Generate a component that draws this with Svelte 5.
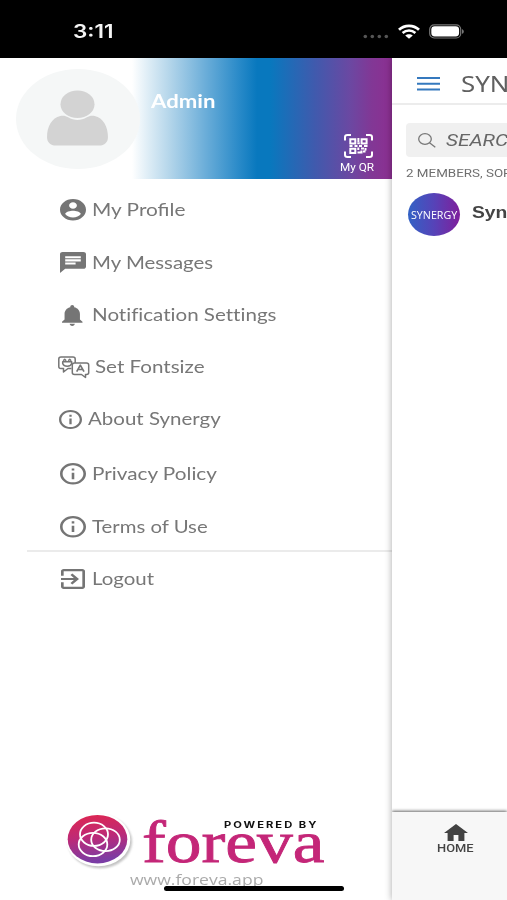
<script>
  const account = 'M12 2C6.48 2 2 6.48 2 12s4.48 10 10 10 10-4.48 10-10S17.52 2 12 2zm0 3c1.66 0 3 1.34 3 3s-1.34 3-3 3-3-1.34-3-3 1.34-3 3-3zm0 14.2c-2.5 0-4.71-1.28-6-3.22.03-1.99 4-3.08 6-3.08 1.99 0 5.97 1.09 6 3.08-1.29 1.94-3.5 3.22-6 3.22z';
  const chat = 'M20 2H4c-1.1 0-1.99.9-1.99 2L2 22l4-4h14c1.1 0 2-.9 2-2V4c0-1.1-.9-2-2-2zM6 9h12v2H6V9zm8 5H6v-2h8v2zm4-6H6V6h12v2z';
  const bell = 'M12 22c1.1 0 2-.9 2-2h-4c0 1.1.89 2 2 2zm6-6v-5c0-3.07-1.64-5.64-4.5-6.32V4c0-.83-.67-1.5-1.5-1.5s-1.5.67-1.5 1.5v.68C7.63 5.36 6 7.92 6 11v5l-2 2v1h16v-1l-2-2z';
  const info = 'M11 17h2v-6h-2v6zm1-15C6.48 2 2 6.48 2 12s4.48 10 10 10 10-4.48 10-10S17.52 2 12 2zm0 18c-4.41 0-8-3.59-8-8s3.59-8 8-8 8 3.59 8 8-3.59 8-8 8zM11 9h2V7h-2v2z';
  const exit = 'M10.09 15.59L11.5 17l5-5-5-5-1.41 1.41L12.67 11H3v2h9.67l-2.58 2.59zM19 3H5c-1.11 0-2 .9-2 2v4h2V5h14v14H5v-4H3v4c0 1.1.89 2 2 2h14c1.1 0 2-.9 2-2V5c0-1.1-.9-2-2-2z';

  const items = [
    { label: 'My Profile', w: 93, h: 52, x: 59.5, gap: 6, iw: 26, ih: 21.5, vb: '2 2 20 20', d: account },
    { label: 'My Messages', w: 121, h: 53, x: 59.5, gap: 6, iw: 26, ih: 21, vb: '2 2 20 20', d: chat },
    { label: 'Notification Settings', w: 185, h: 52, x: 62, gap: 9, iw: 20.5, ih: 21, vb: '4 2.5 16 19.5', d: bell, plain: true },
    { label: 'Set Fontsize', w: 109, h: 52, x: 58, gap: 4.5, iw: 32, ih: 22, vb: '0 0 32 22', d: null },
    { label: 'About Synergy', w: 132.5, h: 52, x: 59, gap: 6, iw: 23, ih: 19, vb: '2 2 20 20', d: info },
    { label: 'Privacy Policy', w: 125.5, h: 58, x: 59.5, gap: 6, iw: 26, ih: 21.5, vb: '2 2 20 20', d: info },
    { label: 'Terms of Use', w: 116, h: 47, x: 59.5, gap: 6, iw: 26, ih: 21.5, vb: '2 2 20 20', d: info },
    { label: 'Logout', w: 62.5, h: 54, x: 60.5, gap: 7, iw: 24, ih: 20, vb: '3 3 18 18', d: exit, rule: true }
  ];

  // Stretches a label horizontally to the given width.
  function fit(node, width) {
    node.style.transform = `scaleX(${width / node.offsetWidth})`;
  }
</script>

<div class="screen">
  <header class="status">
    <span class="time" use:fit={40}>3:11</span>
    <div class="signals">
      <svg width="26" height="5" viewBox="0 0 26 5" fill="#555"><circle cx="2.3" cy="2.5" r="1.8"/><circle cx="9.3" cy="2.5" r="1.8"/><circle cx="16.3" cy="2.5" r="1.8"/><circle cx="23.3" cy="2.5" r="1.8"/></svg>
      <svg class="wifi" width="22" height="14" viewBox="0 0 22 14" fill="none" stroke="#fff"><path d="M1 4.8C6.5-.4 15.5-.4 21 4.8" stroke-width="2.8"/><path d="M4.6 8C8.3 4.7 13.7 4.7 17.4 8" stroke-width="2.6"/><path d="M11 13.8 7.2 10.6C9.3 8.7 12.7 8.7 14.8 10.6Z" fill="#fff" stroke="none"/></svg>
      <svg class="battery" width="36" height="15" viewBox="0 0 36 15"><rect x=".7" y=".8" width="31" height="13.2" rx="4.5" fill="none" stroke="#777" stroke-width="1.2"/><rect x="2.3" y="2.3" width="27.8" height="10.2" rx="3.4" fill="#fff"/><path d="M33 5.2c2.4.6 2.4 4 0 4.6z" fill="#777"/></svg>
    </div>
  </header>

  <div class="body">
    <aside class="drawer">
      <div class="banner">
        <div class="avatar">
          <svg width="63" height="57" viewBox="0 0 64 58" fill="#d3d3d3"><ellipse cx="32" cy="14.5" rx="17.3" ry="14"/><path d="M14.5 26.5c3-.7 5.7-.2 8 1.3 6 3.6 13 3.6 19 0 2.3-1.5 5-2 8-1.3C58 28.5 63 37 63 48c0 5-3.500 8.500-9 8.500H10C4.500 56.500 1 53 1 48c0-11 5-19.500 13.500-21.500z"/></svg>
        </div>
        <span class="name" use:fit={64}>Admin</span>
        <div class="qr">
          <svg width="29" height="24" viewBox="0 0 29 24" fill="none" stroke="#fff">
            <path d="M1 6.500V3Q1 1 3.500 1H7M22 1h3.500Q28 1 28 3v3.500M28 17.500V21q0 2-2.500 2H22M7 23H3.500Q1 23 1 21v-3.500" stroke-width="2"/>
            <path d="M6.300 5.200h5v4.200h-5zM17.600 5.200h5v4.200h-5zM6.300 14.800h5V19h-5z" stroke-width="2"/>
            <path d="M14.400 4v4M13.300 9.300h2.500M5.500 12h3M10.500 12h3M15 12h3M20 12h3.500M14.300 13.500v2.500M17 14.500h3M21.500 14v2.500M13.500 18.600h3.300M19 17.500h2.500M17.500 16.500v3" stroke-width="2"/>
          </svg>
          <span use:fit={34}>My QR</span>
        </div>
      </div>

      <nav class="menu">
        {#each items as it}
          <div class="item" class:ruled={it.rule} style="height:{it.h}px">
            <svg class="icon" style="margin-left:{it.x}px;margin-right:{it.gap}px" width={it.iw} height={it.ih} viewBox={it.vb} preserveAspectRatio="none">
              {#if it.d}
                <path d={it.d} fill="#757575" />
              {:else}
                <g fill="none" stroke="#757575" stroke-width="1.500" stroke-linejoin="round">
                  <path d="M13.500 12.500H10L5.500 16v-3.500H3q-2.200 0-2.200-2V3Q.8.900 3 .900h12q2.200 0 2.200 2v4"/>
                  <path d="M17 7h11.500q2.200 0 2.200 2v7.500q0 2-2.200 2h-1V21.500L23.500 18.500H16.500q-2.200 0-2.200-2V9q0-2 2.200-2z"/>
                  <path d="M18.700 15.700 22.300 9.200l3.700 6.500M20 13.500h4.800" stroke-width="1.700"/>
                  <path d="M4.700 5.800h9v1.700q-1 2.700-4.500 2.700T4.700 7.500zM5.200 4.700 6.700 3.200l1.500 1.500M10.200 4.700l1.500-1.500 1.500 1.500"/>
                </g>
              {/if}
            </svg>
            <span class="label" class:plain={it.plain} use:fit={it.w}>{it.label}</span>
          </div>
        {/each}
      </nav>

      <footer class="brand">
        <svg class="mark" width="70" height="60" viewBox="0 0 70 60">
          <defs>
            <linearGradient id="mark" x1="0" y1="0" x2=".15" y2="1"><stop offset="0" stop-color="#e0264f"/><stop offset=".5" stop-color="#bd2a77"/><stop offset="1" stop-color="#7a3ca5"/></linearGradient>
            <filter id="soft" x="-20%" y="-20%" width="140%" height="140%"><feGaussianBlur stdDeviation="1.200"/></filter>
          </defs>
          <ellipse cx="34" cy="29.800" rx="32" ry="26.500" fill="#999" opacity=".6" filter="url(#soft)"/>
          <ellipse cx="32.300" cy="27.800" rx="32" ry="26.500" fill="#fff"/>
          <ellipse cx="31.500" cy="27.200" rx="29.800" ry="24.200" fill="url(#mark)"/>
          <g fill="none" stroke="#fff" stroke-width="1.800"><ellipse cx="28" cy="22.300" rx="14" ry="11.600"/><ellipse cx="39.500" cy="27.700" rx="14.300" ry="11.400"/><ellipse cx="27" cy="32.500" rx="14.300" ry="11.600"/></g>
        </svg>
        <div class="words">
          <span class="powered" use:fit={95}>POWERED BY</span>
          <span class="foreva" use:fit={183}>foreva</span>
          <span class="site" use:fit={133}>www.foreva.app</span>
        </div>
      </footer>
    </aside>

    <main class="page">
      <div class="topbar">
        <svg width="23" height="14" viewBox="0 0 23 14" fill="#3579be"><path d="M0 0h23v2H0zM0 5.700h23v2H0zM0 11.400h23v2H0z"/></svg>
        <span class="title" use:fit={112}>SYNERGY</span>
      </div>
      <div class="search">
        <svg width="18" height="15" viewBox="0 0 18 15" fill="none" stroke="#777" stroke-width="1.300"><ellipse cx="7" cy="6" rx="6.300" ry="5.300"/><path d="M11.500 9.800 17.300 14.300"/></svg>
        <span use:fit={77}>SEARCH</span>
      </div>
      <div class="count"><span use:fit={129}>2 MEMBERS, SORTED</span></div>
      <div class="member">
        <div class="logo"><span use:fit={46}>SYNERGY</span></div>
        <span class="who" use:fit={76}>Synergy</span>
      </div>
      <div class="tabbar">
        <svg width="24" height="17" viewBox="2 3 20 17" preserveAspectRatio="none" fill="#424242"><path d="M10 20v-6h4v6h5v-8h3L12 3 2 12h3v8z"/></svg>
        <span use:fit={37}>HOME</span>
      </div>
    </main>
  </div>
  <div class="homebar"></div>
</div>

<style>
  :global(body) { margin: 0; background: #fff; overflow: hidden; }
  .screen { position: relative; width: 507px; height: 900px; overflow: hidden; display: flex; flex-direction: column; background: #fff; font-family: Lato, sans-serif; }
  span { display: inline-block; white-space: nowrap; transform-origin: left center; flex: none; }
  svg { display: block; flex: none; overflow: visible; }
  .status { height: 58px; background: #000; display: flex; align-items: flex-start; justify-content: space-between; box-sizing: border-box; padding: 21px 42px 0 73px; }
  .time { font: 600 18px/22px Inter, sans-serif; color: #f4f4f4; }
  .signals { display: flex; align-items: flex-start; padding-top: 3px; }
  .signals > svg:first-child { margin-top: 10px; }
  .wifi { margin: 1px 9px 0 9px; }
  .body { flex: 1; display: flex; min-height: 0; }
  .drawer { width: 392px; display: flex; flex-direction: column; flex: none; }
  .banner { height: 121px; display: flex; align-items: flex-start; background: linear-gradient(90deg, #fff 132px, #deedf6 148px, #b3d5ea 170px, #6caed9 205px, #2b8bc9 238px, #0878be 257px, #0878be 270px, #405aad 315px, #6b48a2 350px, #823795 372px, #8c2f91 392px); }
  .avatar { width: 124px; height: 100px; margin: 11px 0 0 16px; border-radius: 50%; background: #f5f7f7; display: flex; justify-content: center; align-items: flex-start; box-sizing: border-box; padding-top: 21px; padding-right: 2px; }
  .name { margin: 31px 0 0 11px; font: 700 18px/24px Lato, sans-serif; color: #fff; width: max-content; }
  .qr { margin: 76px 17px 0 auto; width: 35px; display: flex; flex-direction: column; align-items: flex-start; }
  .qr svg { margin-left: 4px; }
  .qr span { font: 10px/12px Roboto, sans-serif; color: #fff; margin-top: 4px; }
  .menu { padding-top: 5px; }
  .item { display: flex; align-items: center; }
  .ruled { border-top: 2px solid #ebebeb; margin-left: 27px; }
  .ruled .icon { position: relative; left: -27px; }
  .ruled .label { position: relative; left: -27px; }
  .label { font: 17px/22px Lato, sans-serif; color: #777; }
  .plain { font-variant-ligatures: none; }
  .brand { margin-top: auto; height: 92px; display: flex; align-items: flex-start; padding-left: 66px; }
  .mark { margin-top: 4px; }
  .words { display: flex; flex-direction: column; align-items: flex-start; width: 190px; }
  .powered { margin: 12px 0 0 88px; font: 700 8.500px/10px Inter, sans-serif; letter-spacing: 1.500px; color: #111; }
  .foreva { margin: -15px 0 0 6px; font: 59px/54px "Liberation Serif", serif; color: #c42678; -webkit-text-stroke: .8px #c42678; }
  .site { margin: 1px 0 0 -6px; font: 14px/20px "Open Sans", sans-serif; color: #aaa; }
  .page { width: 115px; display: flex; flex-direction: column; position: relative; background: #fff; box-shadow: 0 0 7px rgba(0, 0, 0, .35); clip-path: inset(0 -1px 0 -12px); overflow: visible; }
  .topbar { height: 47px; box-sizing: border-box; border-bottom: 2px solid #ececec; display: flex; align-items: center; padding: 7px 0 0 25px; }
  .title { margin-left: 21px; font: 21px/28px "Noto Sans", sans-serif; color: #606060; }
  .search { height: 34px; margin: 18px 0 0 14px; background: #f0f0f0; border-radius: 4px 0 0 4px; display: flex; align-items: center; padding-left: 12px; }
  .search span { margin-left: 10px; font: italic 17px/24px Roboto, sans-serif; color: #666; }
  .count { padding: 10px 0 0 14px; font: 11px/14px Roboto, sans-serif; color: #6f6f6f; }
  .member { display: flex; padding: 12px 0 0 16px; }
  .logo { width: 52px; height: 43px; flex: none; border-radius: 50%; background: linear-gradient(90deg, #3262c5, #5643b8 50%, #7f1f9c); display: flex; align-items: center; padding-left: 3px; box-sizing: border-box; }
  .logo span { font: 10px/14px "Open Sans", sans-serif; color: #fff; }
  .who { margin: 8px 0 0 12px; font: 700 16.500px/22px "Liberation Sans", sans-serif; color: #444; }
  .tabbar { margin-top: auto; height: 88px; box-sizing: border-box; background: #f7f7f7; box-shadow: 0 -1px 3px rgba(0, 0, 0, .6); clip-path: inset(-6px 0 0 0); padding: 12px 0 0 45px; display: flex; flex-direction: column; align-items: flex-start; }
  .tabbar svg { margin-left: 7px; }
  .tabbar span { font: 500 11.500px/14px Roboto, sans-serif; color: #444; }
  .homebar { position: absolute; left: 164px; top: 886px; width: 180px; height: 5px; border-radius: 3px; background: #000; }
</style>
